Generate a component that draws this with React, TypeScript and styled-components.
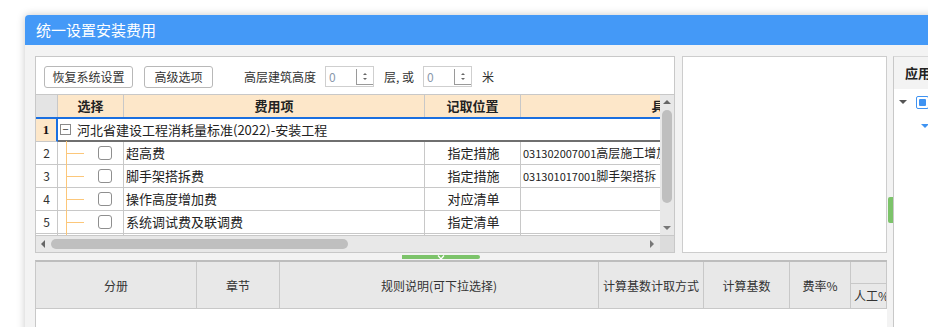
import React from "react";
import styled, { createGlobalStyle } from "styled-components";

const GlobalStyle = createGlobalStyle`
  html, body {
    margin: 0;
    padding: 0;
    overflow: hidden;
    background: #ffffff;
    font-family: "Noto Sans CJK SC", "Liberation Sans", sans-serif;
    color: #222;
  }
`;

interface FeeRow {
  no: number;
  name: string;
  position: string;
  code: string;
  item: string;
}

const rows: FeeRow[] = [
  { no: 2, name: "超高费", position: "指定措施", code: "031302007001", item: "高层施工增加" },
  { no: 3, name: "脚手架搭拆费", position: "指定措施", code: "031301017001", item: "脚手架搭拆" },
  { no: 4, name: "操作高度增加费", position: "对应清单", code: "", item: "" },
  { no: 5, name: "系统调试费及联调费", position: "指定清单", code: "", item: "" },
];

const bottomCols = [
  { label: "分册", width: 161 },
  { label: "章节", width: 83 },
  { label: "规则说明(可下拉选择)", width: 319 },
  { label: "计算基数计取方式", width: 105 },
  { label: "计算基数", width: 86 },
  { label: "费率%", width: 61 },
];

const SpinInput: React.FC = () => (
  <Spin>
    <SpinValue>0</SpinValue>
    <SpinButtons>
      <SpinArrow $up />
      <SpinArrow />
    </SpinButtons>
  </Spin>
);

const App: React.FC = () => {
  return (
    <>
      <GlobalStyle />
      <Window>
        <TitleBar>统一设置安装费用</TitleBar>
        <Body>
          <LeftColumn>
            <TopRow>
              <GridPanel>
                <Toolbar>
                  <ToolButton $w={89}>恢复系统设置</ToolButton>
                  <ToolButton $w={69} $ml={1}>
                    高级选项
                  </ToolButton>
                  <Label $ml={21} $w={72}>
                    高层建筑高度
                  </Label>
                  <SpinInput />
                  <Label $w={30}>层, 或</Label>
                  <SpinInput />
                  <Label>米</Label>
                </Toolbar>
                <GridArea>
                  <GridMain>
                    <Viewport>
                      <HeaderRow>
                        <NumHead />
                        <HeadCell $w={66}>选择</HeadCell>
                        <HeadCell $w={301}>费用项</HeadCell>
                        <HeadCell $w={96}>记取位置</HeadCell>
                        <HeadCell $w={314}>具体项目</HeadCell>
                      </HeaderRow>
                      <DataRow>
                        <NumCell $active>1</NumCell>
                        <GroupCell>
                          <CollapseBox>−</CollapseBox>
                          河北省建设工程消耗量标准(2022)-安装工程
                        </GroupCell>
                      </DataRow>
                      {rows.map((r) => (
                        <DataRow key={r.no}>
                          <NumCell>{r.no}</NumCell>
                          <TreeCell>
                            <CheckBox />
                          </TreeCell>
                          <Cell $w={301}>{r.name}</Cell>
                          <Cell $w={96} $center>
                            {r.position}
                          </Cell>
                          <Cell $w={314}>
                            <Code>{r.code}</Code>
                            <ItemName>{r.item}</ItemName>
                          </Cell>
                        </DataRow>
                      ))}
                      <DataRow>
                        <NumCell />
                        <TreeCell />
                        <Cell $w={301} />
                        <Cell $w={96} />
                        <Cell $w={314} />
                      </DataRow>
                    </Viewport>
                    <VScroll>
                      <ArrowUp />
                      <VThumb />
                      <ArrowDown />
                    </VScroll>
                  </GridMain>
                  <HScrollRow>
                    <HScroll>
                      <ArrowLeft />
                      <HThumb />
                      <ArrowRight />
                    </HScroll>
                    <Corner />
                  </HScrollRow>
                </GridArea>
              </GridPanel>
              <MidPanel />
            </TopRow>
            <HSplitter>
              <GreenBar>
                <Chevron viewBox="0 0 8 5">
                  <path d="M1 0.5 L4 4 L7 0.5" fill="none" stroke="#ffffff" strokeWidth="1.2" />
                </Chevron>
              </GreenBar>
            </HSplitter>
            <BottomTable>
              <BottomHeader>
                {bottomCols.map((c) => (
                  <BottomHeadCell key={c.label} $w={c.width}>
                    {c.label}
                  </BottomHeadCell>
                ))}
                <SplitHeadCell>
                  <SplitTop />
                  <SplitBottom>人工%</SplitBottom>
                </SplitHeadCell>
              </BottomHeader>
            </BottomTable>
          </LeftColumn>
          <VSplitter>
            <GreenHandle />
          </VSplitter>
          <RightPanel>
            <RightHeader>应用</RightHeader>
            <TreeLine>
              <Caret $color="#555" />
              <BlueCheck />
            </TreeLine>
            <TreeLine $indent={22}>
              <Caret $color="#3f93f2" />
            </TreeLine>
          </RightPanel>
        </Body>
      </Window>
    </>
  );
};

export default App;

const Window = styled.div`
  margin: 15px 0 0 25px;
  width: 930px;
  height: 340px;
  border-radius: 4px 4px 0 0;
  box-shadow: 0 0 9px rgba(0, 0, 0, 0.22);
  background: #f3f3f3;
  overflow: hidden;
`;

const TitleBar = styled.div`
  height: 30px;
  background: #4499f7;
  color: #ffffff;
  font-size: 15px;
  line-height: 30px;
  padding-left: 11px;
`;

const Body = styled.div`
  display: flex;
  padding: 11px 0 0 10px;
`;

const LeftColumn = styled.div`
  width: 852px;
  display: flex;
  flex-direction: column;
`;

const TopRow = styled.div`
  display: flex;
  height: 197px;
  gap: 7px;
`;

const GridPanel = styled.div`
  width: 640px;
  box-sizing: border-box;
  border: 1px solid #c8c8c8;
  background: #ffffff;
  display: flex;
  flex-direction: column;
`;

const Toolbar = styled.div`
  height: 37px;
  display: flex;
  align-items: center;
  padding-left: 8px;
  gap: 10px;
  box-sizing: border-box;
  padding-top: 2px;
`;

const ToolButton = styled.button<{ $w: number; $ml?: number }>`
  width: ${(p) => p.$w}px;
  margin-left: ${(p) => p.$ml ?? 0}px;
  height: 22px;
  padding: 0;
  border: 1px solid #b8b8b8;
  border-radius: 3px;
  background: #ffffff;
  font-family: "Noto Sans CJK SC", sans-serif;
  font-size: 12px;
  color: #333;
  line-height: 20px;
`;

const Label = styled.span<{ $w?: number; $ml?: number }>`
  ${(p) => (p.$w ? `width: ${p.$w}px;` : "")}
  margin-left: ${(p) => p.$ml ?? 0}px;
  font-size: 12px;
  white-space: nowrap;
  color: #333;
`;

const Spin = styled.div`
  width: 49px;
  height: 21px;
  box-sizing: border-box;
  border: 1px solid #cfcfcf;
  display: flex;
  align-items: stretch;
  margin-left: -1px;
`;

const SpinValue = styled.div`
  flex: 1;
  font-size: 12px;
  color: #8a98ab;
  padding-left: 3px;
  line-height: 19px;
`;

const SpinButtons = styled.div`
  width: 16px;
  display: flex;
  flex-direction: column;
  justify-content: center;
  align-items: center;
  gap: 3px;
  border-left: 1px solid #9a9a9a;
  margin: 2px 0 1px;
  border-bottom: 1px solid #9a9a9a;
`;

const SpinArrow = styled.div<{ $up?: boolean }>`
  width: 0;
  height: 0;
  border-left: 2px solid transparent;
  border-right: 2px solid transparent;
  ${(p) => (p.$up ? "border-bottom: 2px solid #666;" : "border-top: 2px solid #666;")}
`;

const GridArea = styled.div`
  border-top: 1px solid #c8c8c8;
  display: flex;
  flex-direction: column;
`;

const GridMain = styled.div`
  display: flex;
  height: 140px;
`;

const Viewport = styled.div`
  width: 624px;
  overflow: hidden;
`;

const HeaderRow = styled.div`
  display: flex;
  height: 24px;
  width: 820px;
  border-bottom: 2px solid #1a6fe0;
  box-sizing: border-box;
  background: #fde7c9;
`;

const NumHead = styled.div`
  width: 22px;
  flex-shrink: 0;
  background: #e4e4e4;
  border-right: 1px solid #c8c8c8;
  box-sizing: border-box;
`;

const HeadCell = styled.div<{ $w: number }>`
  width: ${(p) => p.$w}px;
  flex-shrink: 0;
  box-sizing: border-box;
  border-right: 1px solid #c8c8c8;
  font-size: 13px;
  font-weight: bold;
  text-align: center;
  line-height: 22px;
  color: #222;
  white-space: nowrap;
`;

const DataRow = styled.div`
  display: flex;
  height: 23px;
  width: 820px;
`;

const NumCell = styled.div<{ $active?: boolean }>`
  width: 22px;
  flex-shrink: 0;
  box-sizing: border-box;
  border-right: 1px solid #c8c8c8;
  border-bottom: 1px solid #c8c8c8;
  text-align: center;
  font-size: 12px;
  line-height: 22px;
  color: #333;
  ${(p) =>
    p.$active &&
    `
    background: #fde7c9;
    font-weight: bold;
    font-family: "Liberation Serif", serif;
    font-size: 13px;
    color: #111;
    border-right: 2px solid #1a6fe0;
  `}
`;

const GroupCell = styled.div`
  width: 602px;
  box-sizing: border-box;
  border-bottom: 2px solid #6f6f6f;
  display: flex;
  align-items: center;
  gap: 6px;
  padding-left: 2px;
  font-size: 13px;
  color: #222;
`;

const CollapseBox = styled.span`
  width: 11px;
  height: 11px;
  box-sizing: border-box;
  border: 1px solid #8a8a8a;
  display: flex;
  align-items: center;
  justify-content: center;
  font-size: 11px;
  line-height: 1;
  color: #333;
`;

const TreeCell = styled.div`
  position: relative;
  width: 66px;
  flex-shrink: 0;
  box-sizing: border-box;
  border-right: 1px solid #c8c8c8;
  border-bottom: 1px solid #c8c8c8;
  display: flex;
  align-items: center;
  padding-left: 40px;

  &::before {
    content: "";
    position: absolute;
    left: 8px;
    top: -1px;
    bottom: -1px;
    border-left: 1px solid #fcc77a;
  }

  &::after {
    content: "";
    position: absolute;
    left: 8px;
    width: 18px;
    top: 11px;
    border-top: 1px solid #fcc77a;
  }
`;

const CheckBox = styled.span`
  width: 14px;
  height: 14px;
  box-sizing: border-box;
  border: 1px solid #8f8f8f;
  border-radius: 3px;
  background: #fff;
`;

const Cell = styled.div<{ $w: number; $center?: boolean }>`
  width: ${(p) => p.$w}px;
  flex-shrink: 0;
  box-sizing: border-box;
  border-right: 1px solid #c8c8c8;
  border-bottom: 1px solid #c8c8c8;
  font-size: 13px;
  line-height: 22px;
  padding-left: 2px;
  white-space: nowrap;
  overflow: hidden;
  text-align: ${(p) => (p.$center ? "center" : "left")};
  color: #222;
`;

const Code = styled.span`
  font-size: 11px;
`;

const ItemName = styled.span`
  font-size: 12px;
`;

const VScroll = styled.div`
  width: 14px;
  background: #e8e8e8;
  display: flex;
  flex-direction: column;
  align-items: center;
  padding: 5px 0;
  box-sizing: border-box;
`;

const VThumb = styled.div`
  width: 10px;
  height: 93px;
  margin: 6px 0 auto;
  border-radius: 5px;
  background: #bfbfbf;
`;

const ArrowUp = styled.div`
  border-left: 4px solid transparent;
  border-right: 4px solid transparent;
  border-bottom: 4px solid #666;
`;

const ArrowDown = styled.div`
  border-left: 4px solid transparent;
  border-right: 4px solid transparent;
  border-top: 4px solid #777;
`;

const HScrollRow = styled.div`
  display: flex;
  height: 17px;
`;

const HScroll = styled.div`
  width: 624px;
  background: #e8e8e8;
  display: flex;
  align-items: center;
  padding: 0 6px 0 5px;
  box-sizing: border-box;
  border-top: 1px solid #c8c8c8;
`;

const HThumb = styled.div`
  width: 297px;
  height: 10px;
  border-radius: 5px;
  background: #bfbfbf;
  margin: 0 auto 0 6px;
`;

const ArrowLeft = styled.div`
  border-top: 4px solid transparent;
  border-bottom: 4px solid transparent;
  border-right: 4px solid #666;
`;

const ArrowRight = styled.div`
  border-top: 4px solid transparent;
  border-bottom: 4px solid transparent;
  border-left: 4px solid #777;
`;

const Corner = styled.div`
  width: 14px;
  background: #dcdcdc;
  border-top: 1px solid #c8c8c8;
`;

const MidPanel = styled.div`
  width: 205px;
  box-sizing: border-box;
  border: 1px solid #cdcdcd;
  background: #ffffff;
`;

const HSplitter = styled.div`
  height: 7px;
  display: flex;
  align-items: center;
  padding-left: 367px;
`;

const GreenBar = styled.div`
  width: 78px;
  height: 4px;
  margin-top: 1px;
  border-radius: 0 2px 2px 0;
  background: #7cc36a;
  display: flex;
  justify-content: center;
`;

const Chevron = styled.svg`
  width: 8px;
  height: 5px;
`;

const BottomTable = styled.div`
  background: #ffffff;
  border-left: 1px solid #c8c8c8;
  border-top: 2px solid #bdbdbd;
  width: 852px;
  box-sizing: border-box;
  height: 80px;
`;

const BottomHeader = styled.div`
  display: flex;
  height: 46px;
  background: #e8e8e8;
  border-bottom: 1px solid #c8c8c8;
`;

const BottomHeadCell = styled.div<{ $w: number }>`
  width: ${(p) => p.$w}px;
  flex-shrink: 0;
  box-sizing: border-box;
  border-right: 1px solid #c8c8c8;
  display: flex;
  align-items: center;
  justify-content: center;
  font-size: 12px;
  color: #333;
  white-space: nowrap;
`;

const SplitHeadCell = styled.div`
  width: 36px;
  box-sizing: border-box;
  border-right: 1px solid #c8c8c8;
  display: flex;
  flex-direction: column;
  overflow: hidden;
`;

const SplitTop = styled.div`
  height: 22px;
  border-bottom: 1px solid #c8c8c8;
`;

const SplitBottom = styled.div`
  flex: 1;
  font-size: 12px;
  color: #333;
  white-space: nowrap;
  padding-left: 3px;
  line-height: 24px;
`;

const VSplitter = styled.div`
  width: 6px;
  display: flex;
  flex-direction: column;
  padding-top: 141px;
`;

const GreenHandle = styled.div`
  width: 5px;
  margin-left: 1px;
  height: 26px;
  border-radius: 2px 0 0 2px;
  background: #7cc36a;
`;

const RightPanel = styled.div`
  flex: 1;
  border-left: 1px solid #c8c8c8;
  border-top: 1px solid #d8d8d8;
  background: #ffffff;
  height: 300px;
`;

const RightHeader = styled.div`
  height: 32px;
  background: #f3f3f3;
  font-size: 13px;
  font-weight: bold;
  line-height: 32px;
  padding-left: 11px;
  color: #222;
`;

const TreeLine = styled.div<{ $indent?: number }>`
  display: flex;
  align-items: center;
  height: 22px;
  padding-left: ${(p) => 5 + (p.$indent ?? 0)}px;
  margin-top: 2px;
  gap: 9px;
`;

const Caret = styled.div<{ $color: string }>`
  border-left: 4px solid transparent;
  border-right: 4px solid transparent;
  border-top: 4px solid ${(p) => p.$color};
`;

const BlueCheck = styled.div`
  width: 13px;
  height: 13px;
  box-sizing: border-box;
  border: 1px solid #3f93f2;
  border-radius: 2px;
  padding: 2px;
  &::after {
    content: "";
    display: block;
    width: 100%;
    height: 100%;
    background: #3f93f2;
    border-radius: 1px;
  }
`;
